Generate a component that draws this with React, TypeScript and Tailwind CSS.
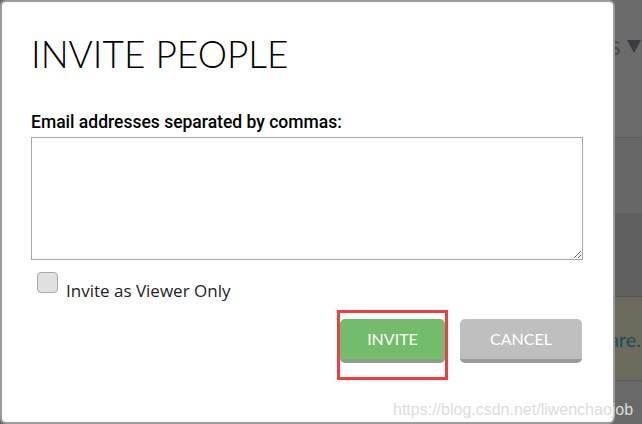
import React from "react";

const font = { fontFamily: "Lato, 'Open Sans', sans-serif" };

function Backdrop() {
  return (
    <div className="flex h-[424px] w-full flex-col bg-[#6a6a6a]">
      <div className="flex h-[137px] items-start justify-end bg-[#6b6b6b] pt-[30px] pr-[1px]">
        <span className="text-[27px] leading-[30px] text-[#4a4a4a]" style={font}>
          Users
        </span>
        <svg className="mt-[10px] ml-[6px]" width="14" height="13" viewBox="0 0 14 13">
          <polygon points="0,0 14,0 7,13" fill="#3b3b41" />
        </svg>
      </div>
      <div className="h-[76px] border-t border-[#5c5c5c] bg-[#676767]" />
      <div className="h-[83px] bg-[#5f5f5f]" />
      <div className="flex h-[84px] items-center justify-end border-t border-[#555] bg-[#6b6a5d] pr-[1px]">
        <span className="text-[20px] text-[#1d4c5b]" style={font}>
          to share.
        </span>
      </div>
      <div className="flex-1 border-t border-[#5a5a5a] bg-[#696969]" />
    </div>
  );
}

function Modal() {
  return (
    <div
      className="absolute top-0 left-0 flex h-[424px] w-[615px] flex-col rounded-[6px] border-2 border-[#9c9c9c] bg-white pt-[34px] pr-[30px] pl-[29px]"
      style={font}
    >
      <h1 className="text-[37px] leading-[36px] font-light text-black">INVITE PEOPLE</h1>
      <label
        className="mt-[40px] mb-[5px] text-[17.5px] leading-[20px] font-medium text-black"
        style={{ fontFamily: "Roboto, sans-serif" }}
      >
        Email addresses separated by commas:
      </label>
      <textarea className="h-[123px] w-full resize border border-[#a9a9a9] bg-white p-2 text-sm outline-none" />
      <div className="mt-[12px] ml-[6px] flex items-start gap-[8px]">
        <span className="h-[21px] w-[21px] rounded-[4px] border border-[#a8a8a8] bg-[#e1e1e1]" />
        <span
          className="mt-[9px] text-[17px] leading-[20px] text-[#1c1c26]"
          style={{ fontFamily: "'Open Sans', sans-serif" }}
        >
          Invite as Viewer Only
        </span>
      </div>
      <div className="mt-[18px] mr-[1px] flex justify-end gap-[15px]">
        <div className="relative">
          <button className="h-[44px] w-[105px] rounded-[5px] border-b-4 border-[#8d9e8a] bg-[#73bd6a] text-[16px] text-white">
            INVITE
          </button>
          <span className="pointer-events-none absolute top-[-9px] right-[-3px] bottom-[-17px] left-[-3px] border-[3px] border-[#f53b3b]" />
        </div>
        <button className="h-[44px] w-[122px] rounded-[5px] border-b-4 border-[#9a9a9a] bg-[#bfbfbf] text-[16px] text-white">
          CANCEL
        </button>
      </div>
    </div>
  );
}

export default function App() {
  return (
    <div className="relative h-[424px] w-[642px] overflow-hidden">
      <Backdrop />
      <Modal />
      <span
        className="pointer-events-none absolute top-[398px] left-[393px] text-[16px] text-[#dcdcdc]"
        style={{ fontFamily: "'Liberation Sans', Arial, sans-serif" }}
      >
        https://blog.csdn.net/liwenchaojob
      </span>
    </div>
  );
}
